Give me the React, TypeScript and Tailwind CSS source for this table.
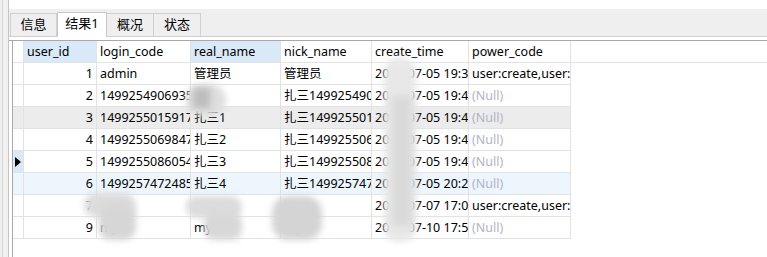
import { FC } from "react";

type Row = {
	id: string;
	login: string;
	real: string;
	nick: string;
	time: string;
	power: string | null;
	bg?: string;
	current?: boolean;
};

const rows: Row[] = [
	{ id: "1", login: "admin", real: "管理员", nick: "管理员", time: "2017-07-05 19:35:12", power: "user:create,user:delete" },
	{ id: "2", login: "1499254906935", real: "", nick: "扎三1499254906935", time: "2017-07-05 19:41:46", power: null },
	{ id: "3", login: "1499255015917", real: "扎三1", nick: "扎三1499255015917", time: "2017-07-05 19:43:35", power: null, bg: "bg-[#ececec]" },
	{ id: "4", login: "1499255069847", real: "扎三2", nick: "扎三1499255069847", time: "2017-07-05 19:44:29", power: null },
	{ id: "5", login: "1499255086054", real: "扎三3", nick: "扎三1499255086054", time: "2017-07-05 19:44:46", power: null, current: true },
	{ id: "6", login: "1499257472485", real: "扎三4", nick: "扎三1499257472485", time: "2017-07-05 20:24:32", power: null, bg: "bg-[#edf5fd]" },
	{ id: "7", login: "mcc", real: "mcc", nick: "mcc", time: "2017-07-07 17:02:11", power: "user:create,user:delete" },
	{ id: "9", login: "my", real: "my", nick: "my", time: "2017-07-10 17:55:20", power: null },
];

const cell = "shrink-0 overflow-hidden whitespace-nowrap border-r border-[#e2e2e2] px-[3px] leading-[21px]";

// blurred patches that hide data in the source shot
const blurs = [
	{ cls: "left-[186px] top-[84px] w-[40px] h-[32px] rounded-full bg-[#dedede]" },
	{ cls: "left-[193px] top-[88px] w-[17px] h-[20px] bg-[#bdbdbd]" },
	{ cls: "left-[384px] top-[58px] w-[32px] h-[184px] rounded-[14px] bg-[#e8e8e8]" },
	{ cls: "left-[392px] top-[96px] w-[20px] h-[130px] bg-[#dadada]" },
	{ cls: "left-[84px] top-[193px] w-[52px] h-[24px] rounded-[12px] bg-[#dcdcdc]" },
	{ cls: "left-[99px] top-[205px] w-[37px] h-[35px] rounded-[12px] bg-[#d6d6d6]" },
	{ cls: "left-[186px] top-[196px] w-[56px] h-[22px] rounded-[12px] bg-[#dcdcdc]" },
	{ cls: "left-[204px] top-[212px] w-[38px] h-[28px] rounded-[10px] bg-[#d8d8d8]" },
	{ cls: "left-[272px] top-[196px] w-[50px] h-[44px] rounded-[16px] bg-[#d4d4d4]" },
];

const App: FC = () => {
	return (
		<div
			className="relative flex h-[257px] w-[767px] overflow-hidden bg-white text-[12.5px] text-black"
			style={{ fontFamily: '"Noto Sans", "Noto Sans CJK SC", sans-serif' }}
		>
			{/* left strip */}
			<div className="h-full w-[9px] shrink-0 border-r border-[#c4c4c4] bg-[#f0f0f0]">
				<div className="ml-[2px] h-full w-px bg-[#d8d8d8]" />
			</div>

			<div className="flex min-w-0 flex-1 flex-col">
				<div className="h-[9px] shrink-0" />
				{/* tab strip */}
				<div className="flex h-[28px] shrink-0 items-end border-b border-[#cfcfcf] bg-[#efefef] pl-px text-[13px]">
					{["信息", "结果1", "概况", "状态"].map((t, i) =>
						i === 1 ? (
							<div
								key={t}
								className="relative -mb-px flex h-[25px] w-[50px] items-center justify-center border border-b-0 border-[#c8c8c8] bg-white pb-[2px]"
							>
								{t}
							</div>
						) : (
							<div
								key={t}
								className="flex h-[23px] w-[47px] items-center justify-center border border-b-0 border-l-0 border-[#d0d0d0] bg-[#efefef] first:border-l"
							>
								{t}
							</div>
						),
					)}
				</div>
				<div className="h-[3px] shrink-0" />

				{/* grid */}
				<div className="flex flex-1 flex-col border-t border-[#a8a8a8]">
					<div className="ml-[3px] flex flex-1 flex-col border-l border-[#a8a8a8]">
						<div className="flex h-[22px] border-b border-[#e2e2e2]">
							<div className="w-[11px] shrink-0 border-r border-[#e2e2e2]" />
							<div className={`${cell} w-[73px] bg-[#d9e9f7]`}>user_id</div>
							<div className={`${cell} w-[94px]`}>login_code</div>
							<div className={`${cell} w-[90px] bg-[#d9e9f7]`}>real_name</div>
							<div className={`${cell} w-[91px]`}>nick_name</div>
							<div className={`${cell} w-[97px]`}>create_time</div>
							<div className={`${cell} w-[102px]`}>power_code</div>
						</div>
						{rows.map((r) => (
							<div key={r.id} className={`flex h-[22px] w-fit border-b border-[#e2e2e2] ${r.bg ?? ""}`}>
								<div
									className={`flex w-[11px] shrink-0 items-center justify-center border-r border-[#e2e2e2] ${r.current ? "bg-[#d9e9f7]" : ""}`}
								>
									{r.current && (
										<div className="h-0 w-0 border-y-[5px] border-l-[6px] border-y-transparent border-l-black" />
									)}
								</div>
								<div className={`${cell} w-[73px] text-right`}>{r.id}</div>
								<div className={`${cell} w-[94px]`}>{r.login}</div>
								<div className={`${cell} w-[90px]`}>{r.real}</div>
								<div className={`${cell} w-[91px]`}>{r.nick}</div>
								<div className={`${cell} w-[97px]`}>{r.time}</div>
								<div className={`${cell} w-[102px] ${r.power ? "" : "text-[#b3b3c6]"}`}>
									{r.power ?? "(Null)"}
								</div>
							</div>
						))}
					</div>
				</div>
			</div>

			{blurs.map((b, i) => (
				<div key={i} className={`pointer-events-none absolute blur-[3px] ${b.cls}`} />
			))}
		</div>
	);
};

export default App;
